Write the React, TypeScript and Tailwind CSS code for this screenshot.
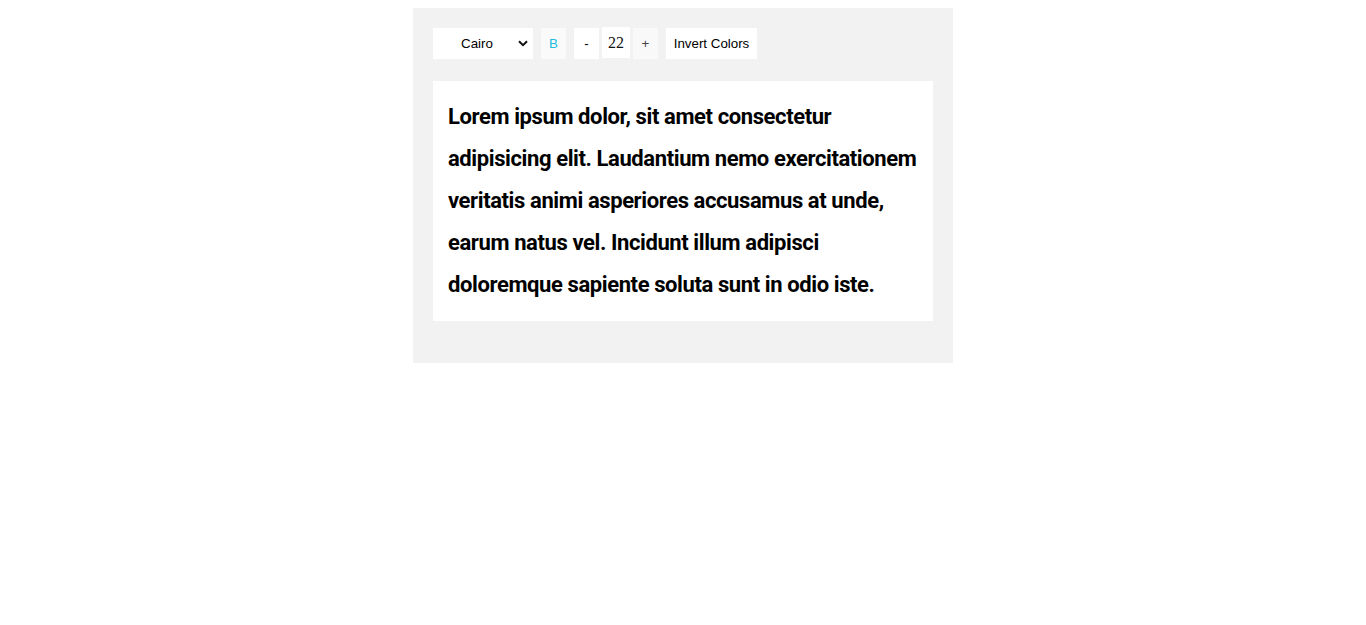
import type { FC } from "react";

const lines = [
  "Lorem ipsum dolor, sit amet consectetur",
  "adipisicing elit. Laudantium nemo exercitationem",
  "veritatis animi asperiores accusamus at unde,",
  "earum natus vel. Incidunt illum adipisci",
  "doloremque sapiente soluta sunt in odio iste.",
];

const App: FC = () => {
  return (
    <div className="w-full min-h-[625px] bg-white pt-2">
      <div className="mx-auto w-[540px] bg-[#f2f2f2] px-5 pt-5 pb-[42px]">
        {/* toolbar */}
        <div className="flex items-start h-[31px] font-['Liberation_Sans',Arial,sans-serif] text-[13.33px] text-black">
          <div className="relative w-[100px] h-[31px] bg-white">
            <select className="appearance-none w-full h-full bg-transparent text-center pr-3 outline-none">
              <option>Cairo</option>
            </select>
            <svg
              className="absolute right-[5px] top-[12px] pointer-events-none"
              width="10"
              height="7"
              viewBox="0 0 10 7"
            >
              <path d="M1 1.2 L5 5.2 L9 1.2" fill="none" stroke="#111" strokeWidth="2" />
            </svg>
          </div>
          <button className="ml-2 w-[25px] h-[31px] bg-[#fafafa] text-[#22bde0]">B</button>
          <button className="ml-2 w-[25px] h-[31px] bg-white">-</button>
          <span className="ml-[3px] -mt-px w-[28px] h-[31px] bg-white flex items-center justify-center font-['Liberation_Serif','Times_New_Roman',serif] text-[16px] text-[#111]">
            22
          </span>
          <button className="ml-[3px] w-[25px] h-[31px] bg-[#f9f9f9] text-[#444]">+</button>
          <button className="ml-2 w-[91px] h-[31px] bg-white">Invert Colors</button>
        </div>

        {/* text */}
        <div className="mt-[22px] bg-white px-[15px] py-[15px]">
          <p className="font-['Roboto',sans-serif] font-bold text-[22px] leading-[42px] tracking-[-0.4px] text-black whitespace-nowrap">
            {lines.map((l, i) => (
              <span key={i} className="block">
                {l}
              </span>
            ))}
          </p>
        </div>
      </div>
    </div>
  );
};

export default App;
